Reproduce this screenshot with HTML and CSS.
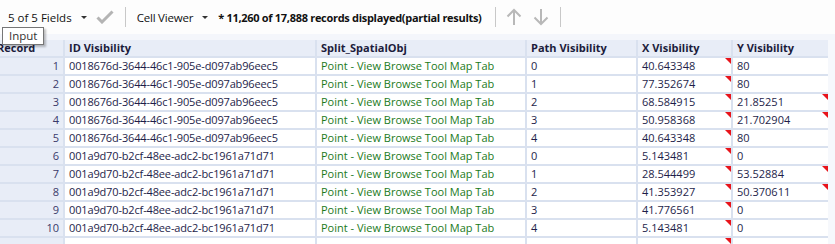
FILE: index.html
```html
<!DOCTYPE html>
<html>
<head>
<meta charset="utf-8">
<link rel="stylesheet" href="styles.css">
</head>
<body>
<div class="toolbar">
  <span class="tb-text fields">5 of 5 Fields</span>
  <span class="caret"></span>
  <svg class="check" width="18" height="14" viewBox="0 0 18 14"><path d="M1.5 7.5 L6 12 L16.5 1.5" fill="none" stroke="#b4b4b4" stroke-width="3"/></svg>
  <span class="sep"></span>
  <span class="tb-text viewer">Cell Viewer</span>
  <span class="caret"></span>
  <span class="tb-text status">* 11,260 of 17,888 records displayed(partial results)</span>
  <span class="sep sep2"></span>
  <svg class="arrow" width="16" height="18" viewBox="0 0 16 18"><path d="M8 17 V2 M1.5 8.5 L8 2 L14.5 8.5" fill="none" stroke="#b8b8b8" stroke-width="2"/></svg>
  <svg class="arrow" width="16" height="18" viewBox="0 0 16 18"><path d="M8 1 V16 M1.5 9.5 L8 16 L14.5 9.5" fill="none" stroke="#b8b8b8" stroke-width="2"/></svg>
  <span class="sep sep3"></span>
</div>
<div class="band"></div>
<div class="grid">
  <div class="hd rec-hd">Record</div>
  <div class="hd">ID Visibility</div>
  <div class="hd">Split_SpatialObj</div>
  <div class="hd">Path Visibility</div>
  <div class="hd">X Visibility</div>
  <div class="hd">Y Visibility</div>

  <div class="rec">1</div><div class="c id">0018676d-3644-46c1-905e-d097ab96eec5</div><div class="c g">Point - View Browse Tool Map Tab</div><div class="c">0</div><div class="c t">40.643348</div><div class="c">80</div>
  <div class="rec">2</div><div class="c id">0018676d-3644-46c1-905e-d097ab96eec5</div><div class="c g">Point - View Browse Tool Map Tab</div><div class="c">1</div><div class="c t">77.352674</div><div class="c">80</div>
  <div class="rec">3</div><div class="c id">0018676d-3644-46c1-905e-d097ab96eec5</div><div class="c g">Point - View Browse Tool Map Tab</div><div class="c">2</div><div class="c t">68.584915</div><div class="c t">21.85251</div>
  <div class="rec">4</div><div class="c id">0018676d-3644-46c1-905e-d097ab96eec5</div><div class="c g">Point - View Browse Tool Map Tab</div><div class="c">3</div><div class="c t">50.958368</div><div class="c t">21.702904</div>
  <div class="rec">5</div><div class="c id">0018676d-3644-46c1-905e-d097ab96eec5</div><div class="c g">Point - View Browse Tool Map Tab</div><div class="c">4</div><div class="c t">40.643348</div><div class="c">80</div>
  <div class="rec">6</div><div class="c id">001a9d70-b2cf-48ee-adc2-bc1961a71d71</div><div class="c g">Point - View Browse Tool Map Tab</div><div class="c">0</div><div class="c t">5.143481</div><div class="c">0</div>
  <div class="rec">7</div><div class="c id">001a9d70-b2cf-48ee-adc2-bc1961a71d71</div><div class="c g">Point - View Browse Tool Map Tab</div><div class="c">1</div><div class="c t">28.544499</div><div class="c t">53.52884</div>
  <div class="rec">8</div><div class="c id">001a9d70-b2cf-48ee-adc2-bc1961a71d71</div><div class="c g">Point - View Browse Tool Map Tab</div><div class="c">2</div><div class="c t">41.353927</div><div class="c t">50.370611</div>
  <div class="rec">9</div><div class="c id">001a9d70-b2cf-48ee-adc2-bc1961a71d71</div><div class="c g">Point - View Browse Tool Map Tab</div><div class="c">3</div><div class="c t">41.776561</div><div class="c">0</div>
  <div class="rec">10</div><div class="c id">001a9d70-b2cf-48ee-adc2-bc1961a71d71</div><div class="c g">Point - View Browse Tool Map Tab</div><div class="c">4</div><div class="c t">5.143481</div><div class="c">0</div>
  <div class="rec"></div><div class="c"></div><div class="c g"></div><div class="c"></div><div class="c t"></div><div class="c"></div>
</div>
<div class="tooltip">Input</div>
</body>
</html>
```
FILE: styles.css
```css
html, body {
  margin: 0;
  padding: 0;
  width: 835px;
  height: 244px;
  overflow: hidden;
  background: #f6f8fc;
  font-family: "Open Sans", "Noto Sans", sans-serif;
  font-size: 11px;
  color: #000;
}
body { position: relative; }

.toolbar {
  height: 34px;
  display: flex;
  align-items: center;
  padding-left: 8px;
  background: #fdfdfd;
  white-space: nowrap;
}
.tb-text { font-size: 11.5px; color: #111; }
.viewer { letter-spacing: -0.2px; }
.status { font-weight: 700; font-size: 11px; margin-left: 10px; letter-spacing: -0.3px; }
.caret {
  width: 0; height: 0;
  border-left: 3px solid transparent;
  border-right: 3px solid transparent;
  border-top: 3px solid #333;
  margin-left: 9px;
  margin-top: 1px;
}
.check { margin-left: 9px; }
.sep {
  width: 1px; height: 20px;
  background: #c8c8c8;
  margin-left: 11px;
  margin-right: 11px;
}
.sep2 { margin-left: 13px; margin-right: 10px; }
.arrow { margin-right: 11px; }
.sep3 { margin-left: 0; }

.band { height: 6px; background: #f4f6fb; }

.grid {
  display: grid;
  grid-template-columns: 63px 250px 208px 109px 93px 95px;
  grid-auto-rows: 16px;
  grid-template-rows: 16px;
  gap: 2px;
  width: 828px;
  background: #d9e1ef;
  padding-bottom: 2px;
}
.hd {
  background: #e8edf7;
  font-weight: 700;
  color: #1c1c3c;
  padding-left: 4px;
  line-height: 16px;
  white-space: nowrap;
  overflow: hidden;
}
.rec-hd { padding-left: 0; text-indent: -3px; }
.rec {
  background: #e8edf7;
  text-align: right;
  padding-right: 4px;
  color: #3a3a6a;
  line-height: 16px;
}
.c {
  background: #fff;
  padding-left: 4px;
  color: #1e1e4a;
  line-height: 16px;
  white-space: nowrap;
  position: relative;
}
.id { letter-spacing: -0.15px; }
.g { color: #1b7a1b; }
.t::after {
  content: "";
  position: absolute;
  top: 0;
  right: 0;
  border-top: 6px solid #e8141b;
  border-left: 6px solid transparent;
}

.tooltip {
  position: absolute;
  left: 2px;
  top: 27px;
  height: 16px;
  line-height: 15px;
  padding: 0 6px;
  background: #fff;
  border: 1px solid #767676;
  box-shadow: 2px 2px 2px rgba(0,0,0,0.25);
  font-size: 11.5px;
  color: #333;
}
```
